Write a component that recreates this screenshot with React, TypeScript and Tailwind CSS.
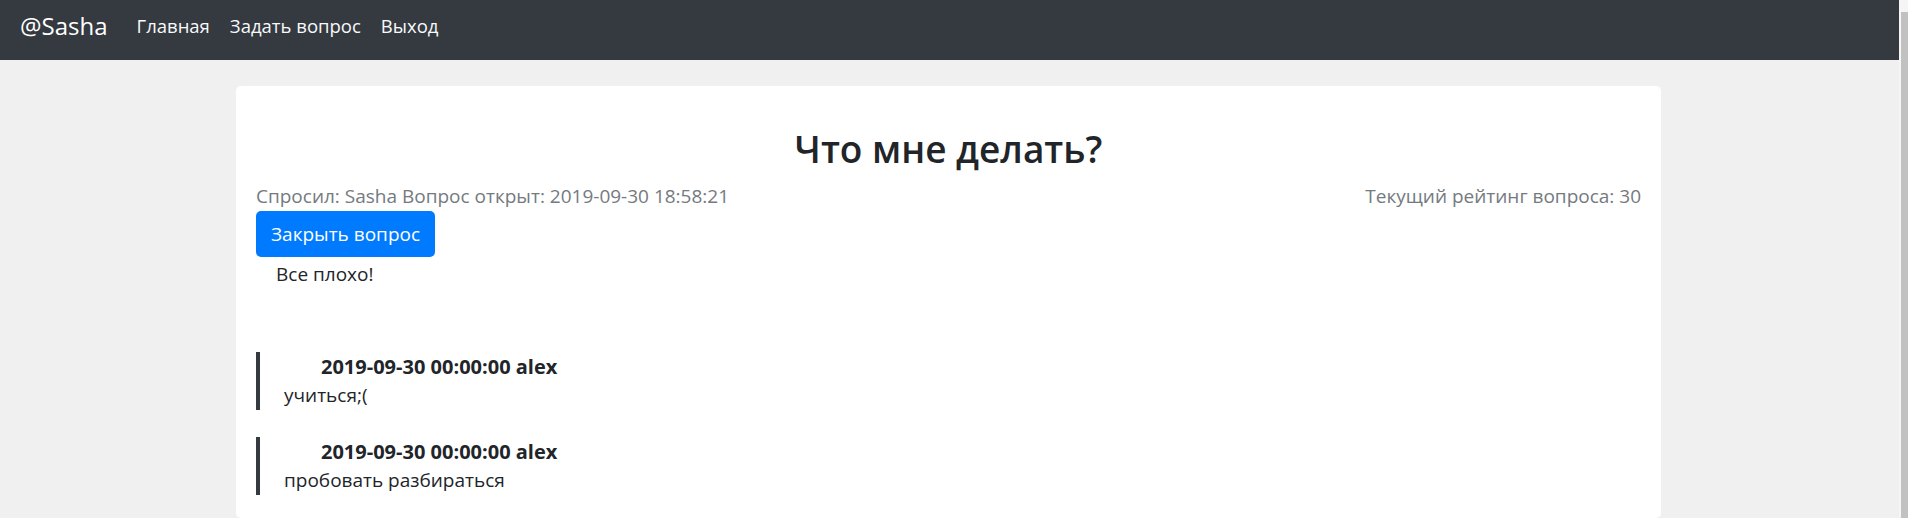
import React from "react";

const comments = [
  { date: "2019-09-30 00:00:00", author: "alex", text: "учиться;(" },
  { date: "2019-09-30 00:00:00", author: "alex", text: "пробовать разбираться" },
];

export default function App() {
  return (
    <div
      className="w-[1908px] h-[518px] flex overflow-hidden bg-[#f0f0f0] text-[#212529]"
      style={{ fontFamily: '"Open Sans", "Noto Sans", sans-serif' }}
    >
      <div className="w-[1899px] flex flex-col">
        <nav className="h-[60px] bg-[#343a40] shrink-0">
          <div className="h-[52px] flex items-center pl-[20px]">
            <span className="text-[24px] text-white mr-[19px]">@Sasha</span>
            <a className="text-[18.5px] text-[#f8f9fa] px-[10px]">Главная</a>
            <a className="text-[18.5px] text-[#f8f9fa] px-[10px]">Задать вопрос</a>
            <a className="text-[18.5px] text-[#f8f9fa] px-[10px]">Выход</a>
          </div>
        </nav>
        <main className="flex-1 pt-[26px]">
          <div className="ml-[236px] w-[1425px] h-full bg-white rounded-[5px] pt-[39px] px-[20px]">
            <h2 className="text-[37px] font-semibold leading-[48px] text-center">Что мне делать?</h2>
            <div className="mt-[8px] flex justify-between leading-[30px] text-[19px] text-[#747a80]">
              <span>Спросил: Sasha Вопрос открыт: 2019-09-30 18:58:21</span>
              <span>Текущий рейтинг вопроса: 30</span>
            </div>
            <button className="h-[46px] px-[15px] bg-[#007bff] text-white rounded-[5px] text-[19px]">
              Закрыть вопрос
            </button>
            <p className="mt-[2px] pl-[20px] leading-[30px] text-[19px]">Все плохо!</p>
            <div className="mt-[63px] flex flex-col gap-[27px]">
              {comments.map((c, i) => (
                <div key={i} className="border-l-[4px] border-[#343a40] text-[19px] leading-[29px]">
                  <div className="pl-[61px] font-bold text-[20px]">
                    {c.date} {c.author}
                  </div>
                  <div className="pl-[24px]">{c.text}</div>
                </div>
              ))}
            </div>
          </div>
        </main>
      </div>
      <div className="w-[2px] bg-[#f5f5f5]" />
      <div className="flex-1 flex flex-col">
        <div className="h-[12px] bg-[#f5f5f5]" />
        <div className="flex-1 bg-[#c1c1c1]" />
      </div>
    </div>
  );
}
